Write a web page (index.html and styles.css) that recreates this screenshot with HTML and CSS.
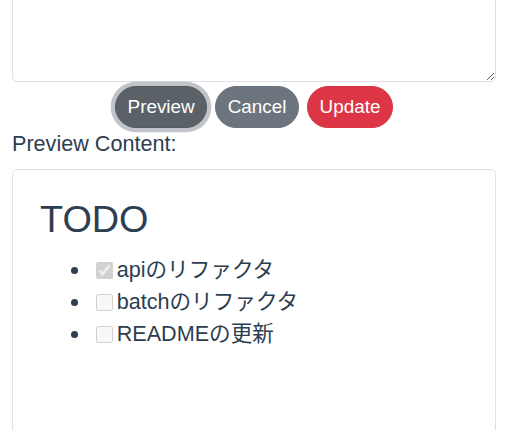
FILE: index.html
```
<!DOCTYPE html>
<html lang="ja">
<head>
<meta charset="utf-8">
<title>TODO Preview</title>
<link rel="stylesheet" href="styles.css">
</head>
<body>
<div class="page">
  <div class="editor">
    <textarea class="editor-input"></textarea>
  </div>
  <div class="actions">
    <button class="btn btn-preview">Preview</button>
    <button class="btn btn-cancel">Cancel</button>
    <button class="btn btn-update">Update</button>
  </div>
  <div class="label">Preview Content:</div>
  <div class="preview">
    <h3 class="preview-title">TODO</h3>
    <ul class="todo-list">
      <li class="todo-item"><input type="checkbox" class="todo-check" checked disabled>apiのリファクタ</li>
      <li class="todo-item"><input type="checkbox" class="todo-check" disabled>batchのリファクタ</li>
      <li class="todo-item"><input type="checkbox" class="todo-check" disabled>READMEの更新</li>
    </ul>
  </div>
</div>
</body>
</html>
```
FILE: styles.css
```
html, body {
  margin: 0;
  padding: 0;
  background: #ffffff;
}
body {
  font-family: "Liberation Sans", Arial, "Noto Sans CJK JP", sans-serif;
  font-size: 21.6px;
  line-height: 1.5;
  color: #2c3e50;
}
.page {
  padding: 0 12px;
}
.editor {
  margin-top: -40px;
}
.editor-input {
  display: block;
  box-sizing: border-box;
  width: 100%;
  height: 122px;
  margin: 0;
  border: 1px solid #dcdfe3;
  border-radius: 5px;
  background: #ffffff;
  font-family: inherit;
  font-size: 21.6px;
}
.actions {
  display: flex;
  justify-content: center;
  gap: 8px;
  margin-top: 4px;
}
.btn {
  box-sizing: border-box;
  height: 42px;
  padding: 0 11.5px;
  border: 1.35px solid transparent;
  border-radius: 999px;
  font-family: "Liberation Sans", Arial, sans-serif;
  font-size: 18.9px;
  line-height: 1.5;
  color: #ffffff;
  cursor: pointer;
}
.btn-preview {
  background: #5a6268;
  border-color: #545b62;
  box-shadow: 0 0 0 4.3px rgba(130, 138, 145, 0.5);
}
.btn-cancel {
  background: #6c757d;
  border-color: #6c757d;
}
.btn-update {
  background: #dc3545;
  border-color: #dc3545;
}
.label {
  line-height: 32.4px;
}
.preview {
  margin-top: 9px;
  min-height: 320px;
  padding: 27px;
  border: 1px solid #e0e2e5;
  border-radius: 5px;
}
.preview-title {
  margin: 0 0 10.8px;
  font-size: 37.8px;
  font-weight: 400;
  line-height: 1.2;
}
.todo-list {
  margin: 0;
  padding-left: 51px;
  list-style: disc;
}
.todo-item {
  height: 32.4px;
  line-height: 32.4px;
}
.todo-check {
  width: 17px;
  height: 17px;
  margin: 0 4px 0 4.7px;
  vertical-align: -2px;
}
```
